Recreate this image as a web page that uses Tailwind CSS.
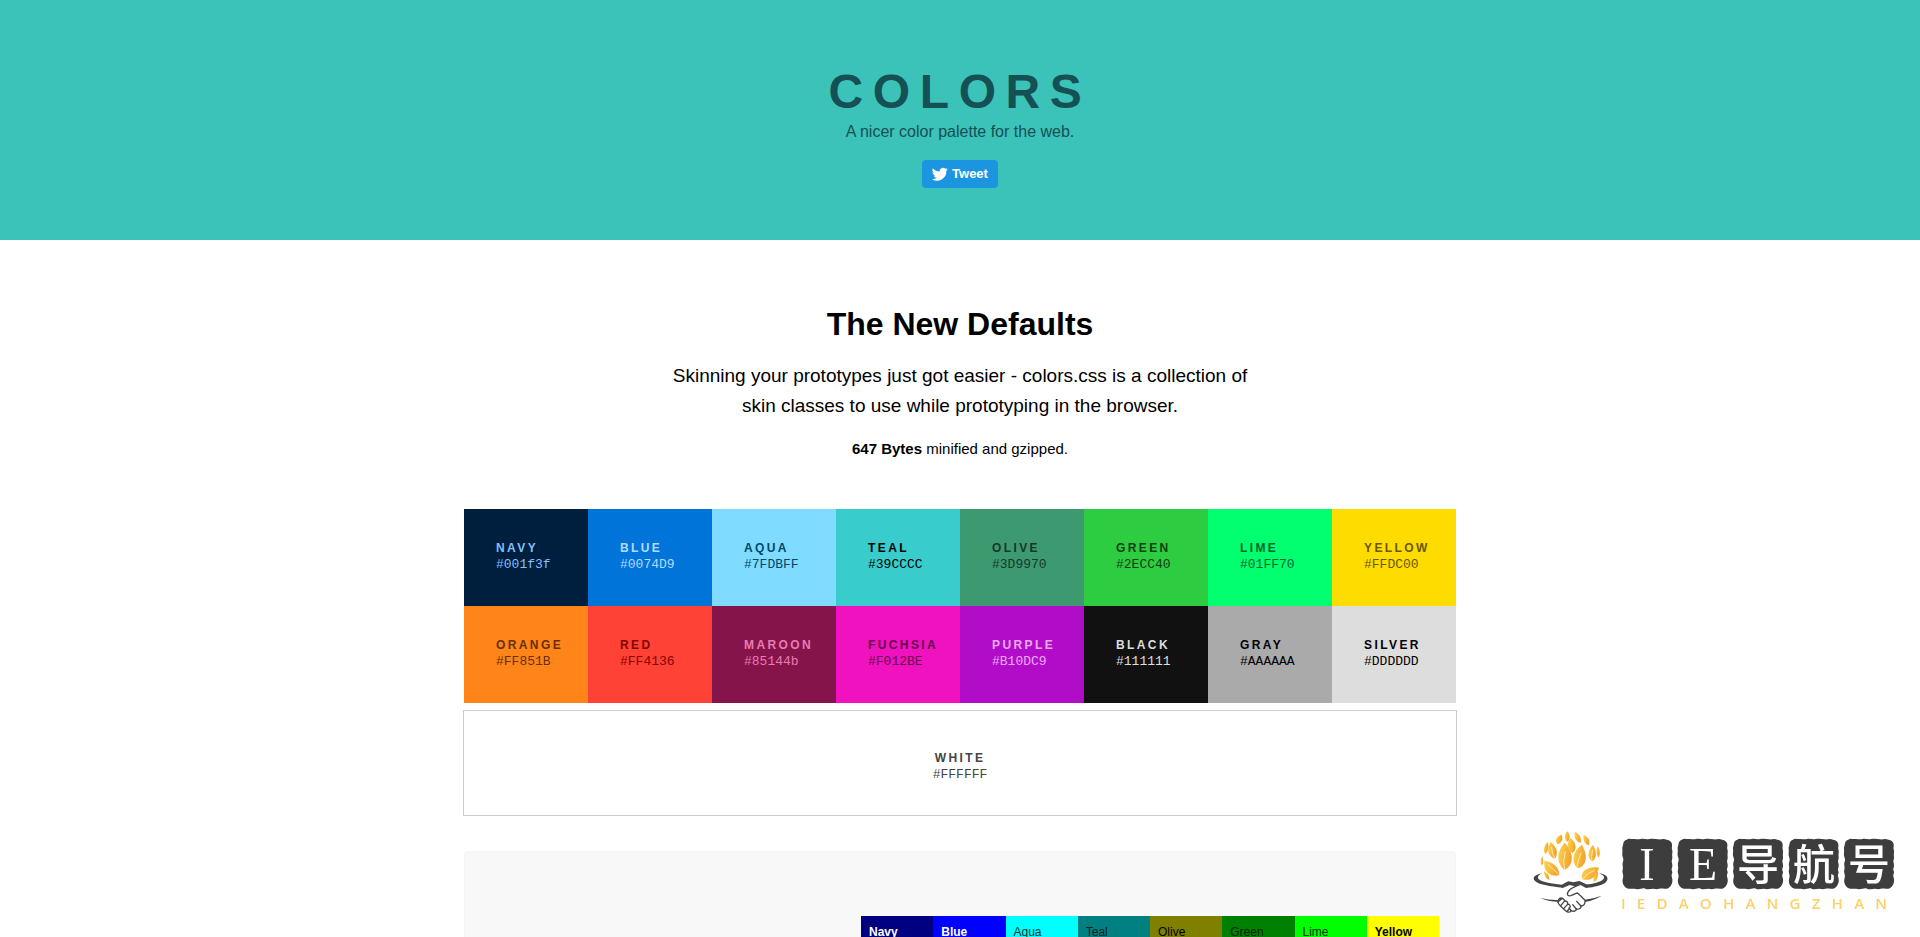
<!DOCTYPE html>
<html lang="en">

<head>
    <meta charset="UTF-8">
    <meta name="viewport" content="width=device-width, initial-scale=1.0">
    <title>Colors - A nicer color palette for the web</title>
    <script src="https://cdn.jsdelivr.net/npm/@tailwindcss/browser@4"></script>
</head>

<body class="bg-white font-['Liberation_Sans',Arial,sans-serif] text-black h-screen overflow-hidden">

    <!-- Header -->
    <header class="flex flex-col items-center bg-[#3bc2b9] pt-16 pb-[52px] text-[#155055]">
        <h1 class="text-5xl leading-[56px] font-bold tracking-[0.2em]">COLORS</h1>
        <p class="text-base leading-6">A nicer color palette for the web.</p>
        <button type="button" class="mt-4 flex h-7 cursor-pointer items-center gap-1 rounded bg-[#1b95e0] px-[10px] text-[13px] font-bold text-white">
            <svg class="size-4" viewBox="0 0 24 24" fill="currentColor" aria-hidden="true">
                <path d="M23.6 4.9c-.9.4-1.8.6-2.8.8 1-.6 1.8-1.6 2.1-2.7-.9.6-2 1-3.1 1.2A4.9 4.9 0 0 0 11.500 8.600 13.900 13.900 0 0 1 1.400 3.500a4.900 4.900 0 0 0 1.500 6.500c-.8 0-1.600-.2-2.200-.6v.1a4.900 4.900 0 0 0 3.900 4.800c-.7.2-1.500.2-2.200.1a4.900 4.900 0 0 0 4.600 3.400A9.900 9.900 0 0 1 0 19.800a13.900 13.900 0 0 0 21.500-12.400c.8-.7 1.500-1.500 2.100-2.500z" />
            </svg>
            Tweet
        </button>
    </header>

    <main class="mx-auto max-w-[992px] pt-16">
        <!-- Intro -->
        <section class="text-center">
            <h2 class="text-[32px] leading-10 font-bold">The New Defaults</h2>
            <p class="mx-auto mt-[17px] max-w-[608px] text-[19px] leading-[30px]">Skinning your prototypes just got easier - colors.css is a collection of skin classes to use while prototyping in the browser.</p>
            <p class="mt-4 text-[15px] leading-6"><strong>647 Bytes</strong> minified and gzipped.</p>
        </section>

        <!-- Palette -->
        <ul class="mt-12 grid grid-cols-8 font-['Liberation_Mono','Courier_New',monospace] text-[13px] leading-[18px] [&_b]:block [&_b]:font-['Liberation_Sans',Arial,sans-serif] [&_b]:text-xs [&_b]:leading-[15px] [&_b]:tracking-[0.2em] [&>li]:py-8 [&>li]:pl-8">
            <li class="bg-[#001f3f] text-[#80bfff]"><b>NAVY</b>#001f3f</li>
            <li class="bg-[#0074d9] text-[#b3dbff]"><b>BLUE</b>#0074D9</li>
            <li class="bg-[#7fdbff] text-[#004966]"><b>AQUA</b>#7FDBFF</li>
            <li class="bg-[#39cccc] text-black"><b>TEAL</b>#39CCCC</li>
            <li class="bg-[#3d9970] text-[#163728]"><b>OLIVE</b>#3D9970</li>
            <li class="bg-[#2ecc40] text-[#0e3e14]"><b>GREEN</b>#2ECC40</li>
            <li class="bg-[#01ff70] text-[#00662c]"><b>LIME</b>#01FF70</li>
            <li class="bg-[#ffdc00] text-[#665800]"><b>YELLOW</b>#FFDC00</li>
            <li class="bg-[#ff851b] text-[#663000]"><b>ORANGE</b>#FF851B</li>
            <li class="bg-[#ff4136] text-[#800600]"><b>RED</b>#FF4136</li>
            <li class="bg-[#85144b] text-[#eb7ab1]"><b>MAROON</b>#85144b</li>
            <li class="bg-[#f012be] text-[#65064f]"><b>FUCHSIA</b>#F012BE</li>
            <li class="bg-[#b10dc9] text-[#efa9f9]"><b>PURPLE</b>#B10DC9</li>
            <li class="bg-[#111111] text-[#dddddd]"><b>BLACK</b>#111111</li>
            <li class="bg-[#aaaaaa] text-black"><b>GRAY</b>#AAAAAA</li>
            <li class="bg-[#dddddd] text-black"><b>SILVER</b>#DDDDDD</li>
        </ul>
        <div class="-mx-px mt-[7px] border border-[#cccccc] pt-10 pb-[31px] text-center font-['Liberation_Mono','Courier_New',monospace] text-[13px] leading-[18px] text-[#444444]">
            <b class="block font-['Liberation_Sans',Arial,sans-serif] text-xs leading-[15px] tracking-[0.2em]">WHITE</b>#FFFFFF
        </div>

        <!-- Browser defaults -->
        <section class="mt-[35px] flex justify-end rounded border border-[#f5f5f5] bg-[#f9f8f8] px-4 pt-16 pb-16">
            <ul class="grid w-[578px] grid-cols-8 text-xs leading-5 [&>li]:p-2 [&>li]:pt-[6px]">
                <li class="bg-[#000080] font-bold text-white">Navy</li>
                <li class="bg-[#0000ff] font-bold text-white">Blue</li>
                <li class="bg-[#00ffff] text-[#003333]">Aqua</li>
                <li class="bg-[#008080] text-[#001f1f]">Teal</li>
                <li class="bg-[#808000]">Olive</li>
                <li class="bg-[#008000] text-[#002600]">Green</li>
                <li class="bg-[#00ff00] text-[#003300]">Lime</li>
                <li class="bg-[#ffff00] font-bold">Yellow</li>
            </ul>
        </section>
    </main>

    <!-- Site mark -->
    <a href="#" class="fixed right-[25px] bottom-[15px]" aria-label="IE导航号">
        <svg class="h-[100px] w-[370px]" viewBox="0 0 370 100" fill="none">
            <defs>
                <linearGradient id="flame" x1="0" y1="0" x2="1" y2="0.3">
                    <stop offset="0" stop-color="#fbd355" />
                    <stop offset="0.5" stop-color="#f8bd3c" />
                    <stop offset="1" stop-color="#f3a32b" />
                </linearGradient>
                <path id="tile" d="M14 4C20 -1 26 3 34 2S46 4 56 2S72 4 82 2S100 1 108 3S124 -1 134 4C146 6 152 14 150 24S153 36 151 44S153 56 150 64S154 78 150 88S154 98 150 106S153 118 151 130C148 146 138 153 126 151S108 154 98 152S80 155 70 151S54 155 42 152S20 155 10 147C1 138 0 128 3 118S-1 104 2 94S-1 80 3 70S-1 56 1 44S-1 32 2 24S2 8 14 4Z" />
            </defs>
            <g transform="scale(0.33333)">
                <!-- leaves -->
                <g fill="url(#flame)">
                    <path d="M119 62C94 90 93 122 118 144C146 130 149 94 119 62Z" />
                    <path d="M171 68C145 86 136 116 157 139C183 134 191 104 171 68Z" />
                    <path d="M58 116C54 148 74 166 104 160C102 136 86 120 58 116Z" />
                    <path d="M222 137C186 132 166 148 171 172C200 179 214 162 222 137Z" />
                    <path d="M77 60C64 82 68 102 90 111C101 92 96 75 77 60Z" />
                    <path d="M204 68C187 85 186 106 201 119C217 108 215 88 204 68Z" />
                    <path d="M137 48C123 65 126 85 142 93C157 84 155 64 137 48Z" />
                    <path d="M110 38C93 42 88 58 98 67C112 61 115 51 110 38Z" />
                    <path d="M127 28C116 40 118 54 128 60C137 50 135 38 127 28Z" />
                    <path d="M150 30C146 46 152 59 167 63C170 46 163 36 150 30Z" />
                    <path d="M176 38C173 54 178 65 191 70C197 56 191 46 176 38Z" />
                    <path d="M68 60C56 72 54 88 61 96C71 86 72 74 68 60Z" />
                    <path d="M218 72C212 86 214 98 221 107C227 94 224 82 218 72Z" />
                    <path d="M51 101C46 114 46 124 51 132C56 124 56 112 51 101Z" />
                    <path d="M56 147C58 162 63 170 73 174C74 162 68 153 56 147Z" />
                    <path d="M219 149C206 158 203 170 207 180C217 174 220 162 219 149Z" />
                </g>
                <g stroke="#ffffff" stroke-width="2">
                    <path d="M121 88Q112 118 119 148M168 92Q158 116 154 144M68 126Q84 142 108 163M210 144Q186 152 168 176M79 74Q80 94 92 115M203 84Q197 104 201 122" />
                </g>
                <!-- dish -->
                <path fill="#454545" d="M52 154C17 160 19 178 50 187C78 194 98 195 113 198L134 189L150 193L163 187L183 198C210 195 229 190 240 183C254 172 249 157 222 154C240 161 242 170 228 177C213 184 196 187 184 187L163 177L145 181L130 178L110 188C86 185 66 183 50 177C34 171 36 160 52 154Z" />
                <!-- handshake -->
                <g stroke="#454545" stroke-width="4" stroke-linecap="round" stroke-linejoin="round">
                    <path d="M165 188C150 193 137 199 131 207C124 216 127 223 137 221C145 219 151 214 157 213C166 220 174 228 182 237" />
                    <path d="M108 228C102 229 98 235 99 241C101 249 111 257 122 266C129 272 137 272 138 265C146 270 154 268 154 261C163 263 169 258 168 252C176 252 181 246 180 238" />
                    <path d="M99 241L108 229C114 228 119 232 118 238L107 251M118 237C126 236 130 242 127 248L116 260M127 246C134 246 138 252 134 258L126 269M138 265L132 258M154 261L143 248M168 252L155 238M102 237L111 230" />
                </g>
                <path fill="#454545" d="M45 228Q74 235 100 234L98 239Q70 239 45 228ZM230 221Q206 230 180 233L182 239Q208 235 230 221Z" />
                <!-- stamps -->
                <g fill="#3d3d3d">
                    <use href="#tile" x="291" y="49" />
                    <use href="#tile" x="457" y="49" />
                    <use href="#tile" x="623" y="49" />
                    <use href="#tile" x="790" y="49" />
                    <use href="#tile" x="956" y="49" />
                </g>
            </g>
            <g class="fill-white font-['Liberation_Serif','Times_New_Roman',serif] text-[46px]" text-anchor="middle">
                <text x="122" y="58">I</text>
                <text x="178" y="58">E</text>
            </g>
            <g class="fill-white font-['Noto_Sans_CJK_SC',sans-serif] text-[42px] font-medium" text-anchor="middle">
                <text x="233" y="58">导</text>
                <text x="289" y="58">航</text>
                <text x="344" y="58">号</text>
            </g>
            <text class="fill-[#fbd06a] font-['Open_Sans',sans-serif] text-[15px] font-semibold tracking-[0.75em]" x="96" y="87">IEDAOHANGZHAN</text>
        </svg>
    </a>
</body>

</html>
